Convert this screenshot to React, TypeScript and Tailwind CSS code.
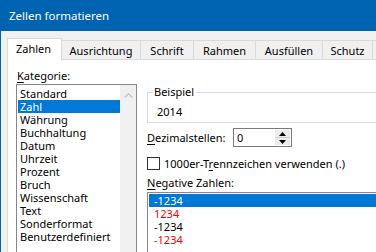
const categories = [
  "Standard",
  "Zahl",
  "Währung",
  "Buchhaltung",
  "Datum",
  "Uhrzeit",
  "Prozent",
  "Bruch",
  "Wissenschaft",
  "Text",
  "Sonderformat",
  "Benutzerdefiniert",
];

const tabs = [
  { label: "Ausrichtung", w: "w-[79px]" },
  { label: "Schrift", w: "w-[53px]" },
  { label: "Rahmen", w: "w-[62px]" },
  { label: "Ausfüllen", w: "w-[67px]" },
  { label: "Schutz", w: "w-[50px]" },
  { label: "", w: "w-[40px]" },
];

const negatives = [
  { text: "-1234", cls: "bg-[#0078d7] text-white" },
  { text: "1234", cls: "text-[#ff0000]" },
  { text: "-1234", cls: "text-black" },
  { text: "-1234", cls: "text-[#ff0000]" },
];

export default function App() {
  return (
    <div
      className="w-[376px] h-[252px] overflow-hidden bg-[#f0f0f0] border-l border-[#0063b1] flex flex-col text-[11px] text-black"
      style={{ fontFamily: '"Noto Sans", "Open Sans", sans-serif' }}
    >
      <div className="h-[31px] shrink-0 bg-[#0063b1] text-white text-[11.5px] pl-[8px] flex items-center">
        Zellen formatieren
      </div>

      <div className="flex items-end h-[21px] mt-[7px] pl-[6px] shrink-0">
        <div className="relative z-10 h-[22px] -mb-px w-[55px] shrink-0 bg-white border border-b-0 border-[#d9d9d9] pl-[8px] leading-[20px]">
          Zahlen
        </div>
        {tabs.map((t) => (
          <div
            key={t.label}
            className={`h-[19px] ${t.w} shrink-0 border-t border-r border-[#d9d9d9] text-center leading-[18px] pt-px`}
          >
            {t.label}
          </div>
        ))}
      </div>

      <div className="ml-[6px] bg-white border-l border-t border-[#d9d9d9] flex pt-[8px] pl-[8px] gap-[10px] shrink-0 h-[260px]">
        <div className="w-[121px] flex flex-col shrink-0">
          <div className="h-[16px] leading-[16px] pl-px">
            <u className="underline-offset-2">K</u>ategorie:
          </div>
          <div className="h-[200px] border border-[#828790] flex">
            <div className="flex-1 pt-[2px] pl-px">
              {categories.map((c) => (
                <div
                  key={c}
                  className={`h-[13px] leading-[13px] pl-[2px] ${
                    c === "Zahl" ? "bg-[#0078d7] text-white" : ""
                  }`}
                >
                  {c}
                </div>
              ))}
            </div>
            <div className="w-[16px] bg-[#f0f0f0] flex justify-center pt-[8px]">
              <svg width="9" height="5" viewBox="0 0 9 5">
                <path d="M0.5 4.5 L4.5 0.8 L8.5 4.5" fill="none" stroke="#c4c4c4" strokeWidth="1.3" />
              </svg>
            </div>
          </div>
        </div>

        <div className="flex flex-col pt-[16px] w-[260px] shrink-0">
          <fieldset className="border border-[#dcdcdc] h-[39px]">
            <legend className="ml-[4px] px-[2px] leading-[16px]">Beispiel</legend>
            <div className="pl-[9px] pt-[4px] leading-[16px]">2014</div>
          </fieldset>

          <div className="flex items-center mt-[5px] h-[19px]">
            <div className="w-[86px] leading-[16px]">
              <u className="underline-offset-2">D</u>ezimalstellen:
            </div>
            <div className="w-[59px] h-[19px] border border-[#7a7a7a] flex items-center bg-white">
              <div className="flex-1 pl-[3px] leading-[16px]">0</div>
              <div className="w-[15px] h-[15px] mr-px flex flex-col bg-[#ececec]">
                <div className="flex-1 flex items-center justify-center border-b border-[#cfcfcf]">
                  <svg width="7" height="4" viewBox="0 0 7 4">
                    <path d="M0 4 L3.5 0 L7 4 Z" fill="#000" />
                  </svg>
                </div>
                <div className="flex-1 flex items-center justify-center">
                  <svg width="7" height="4" viewBox="0 0 7 4">
                    <path d="M0 0 L3.5 4 L7 0 Z" fill="#000" />
                  </svg>
                </div>
              </div>
            </div>
          </div>

          <div className="flex items-center mt-[10px] h-[13px]">
            <div className="w-[13px] h-[13px] border border-[#333333] bg-white shrink-0" />
            <div className="ml-[4px] leading-[16px] whitespace-nowrap">
              1000er-T<u className="underline-offset-2">r</u>ennzeichen verwenden (.)
            </div>
          </div>

          <div className="mt-[5px] h-[16px] leading-[16px]">
            <u className="underline-offset-2">N</u>egative Zahlen:
          </div>
          <div className="mt-px h-[80px] border border-[#828790] pt-px px-px">
            {negatives.map((n, i) => (
              <div key={i} className={`h-[13px] leading-[13px] pl-[5px] ${n.cls}`}>
                {n.text}
              </div>
            ))}
          </div>
        </div>
      </div>
    </div>
  );
}
